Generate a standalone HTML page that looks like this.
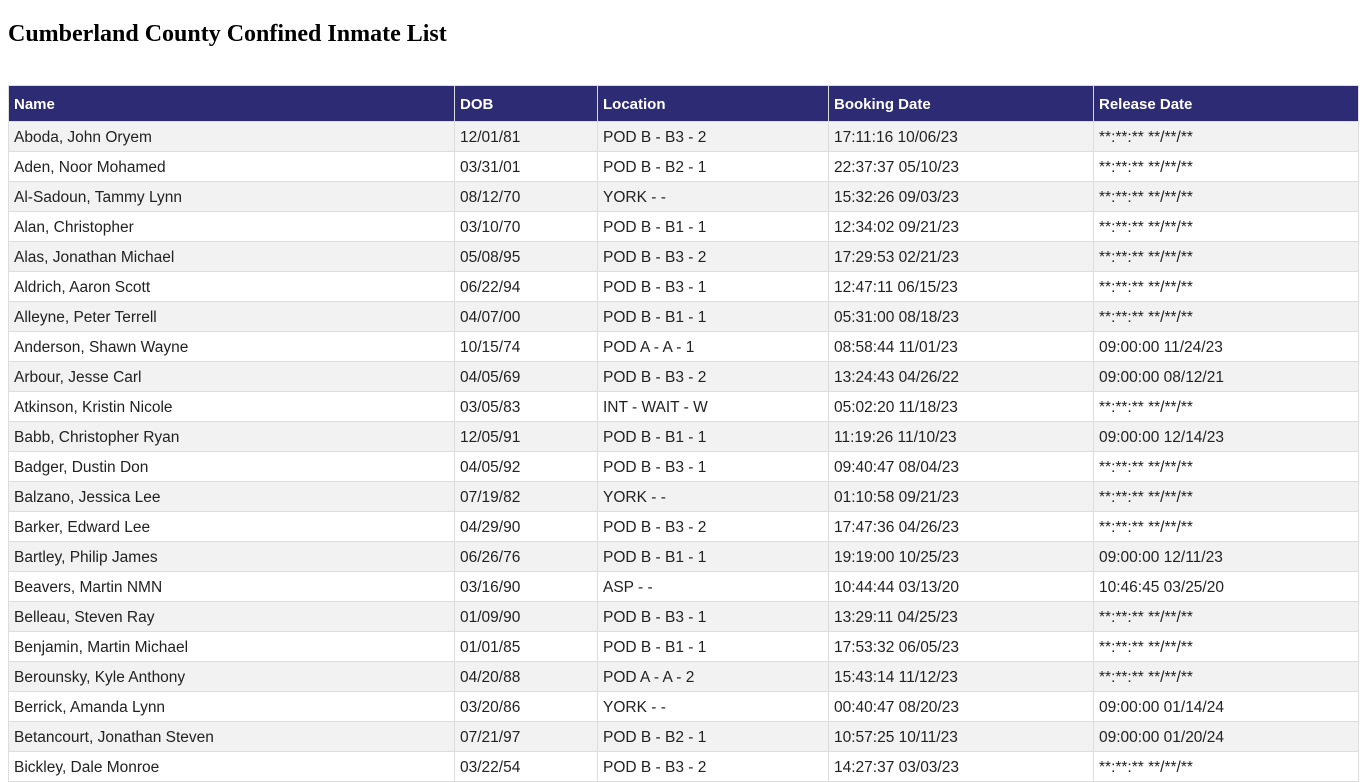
<!DOCTYPE html>
<html><head><meta charset="utf-8"><style>
body{margin:0;background:#fff;font-family:"Liberation Sans",sans-serif;}
h2{font-family:"Liberation Serif",serif;font-size:24px;font-weight:bold;margin:0;position:absolute;left:8px;top:21px;color:#000}
table{position:absolute;left:8px;top:85px;border-collapse:collapse;width:1350px;table-layout:fixed;font-size:15.5px;color:#222}
th{background:#2d2b73;color:#fff;text-align:left;font-weight:bold;height:36px;padding:2px 5px 0;border:1px solid #ddd;font-size:15px;box-sizing:border-box}
td{height:30px;padding:2px 5px 0;border:1px solid #ddd;white-space:nowrap;overflow:hidden;box-sizing:border-box}
tr:nth-child(odd) td{background:#f2f2f2}
</style></head><body>
<h2>Cumberland County Confined Inmate List</h2>
<table>
<colgroup><col style="width:446px"><col style="width:143px"><col style="width:231px"><col style="width:265px"><col style="width:265px"></colgroup>
<thead><tr><th>Name</th><th>DOB</th><th>Location</th><th>Booking Date</th><th>Release Date</th></tr></thead>
<tbody>
<tr><td>Aboda, John Oryem</td><td>12/01/81</td><td>POD B - B3 - 2</td><td>17:11:16 10/06/23</td><td>**:**:** **/**/**</td></tr>
<tr><td>Aden, Noor Mohamed</td><td>03/31/01</td><td>POD B - B2 - 1</td><td>22:37:37 05/10/23</td><td>**:**:** **/**/**</td></tr>
<tr><td>Al-Sadoun, Tammy Lynn</td><td>08/12/70</td><td>YORK - -</td><td>15:32:26 09/03/23</td><td>**:**:** **/**/**</td></tr>
<tr><td>Alan, Christopher</td><td>03/10/70</td><td>POD B - B1 - 1</td><td>12:34:02 09/21/23</td><td>**:**:** **/**/**</td></tr>
<tr><td>Alas, Jonathan Michael</td><td>05/08/95</td><td>POD B - B3 - 2</td><td>17:29:53 02/21/23</td><td>**:**:** **/**/**</td></tr>
<tr><td>Aldrich, Aaron Scott</td><td>06/22/94</td><td>POD B - B3 - 1</td><td>12:47:11 06/15/23</td><td>**:**:** **/**/**</td></tr>
<tr><td>Alleyne, Peter Terrell</td><td>04/07/00</td><td>POD B - B1 - 1</td><td>05:31:00 08/18/23</td><td>**:**:** **/**/**</td></tr>
<tr><td>Anderson, Shawn Wayne</td><td>10/15/74</td><td>POD A - A - 1</td><td>08:58:44 11/01/23</td><td>09:00:00 11/24/23</td></tr>
<tr><td>Arbour, Jesse Carl</td><td>04/05/69</td><td>POD B - B3 - 2</td><td>13:24:43 04/26/22</td><td>09:00:00 08/12/21</td></tr>
<tr><td>Atkinson, Kristin Nicole</td><td>03/05/83</td><td>INT - WAIT - W</td><td>05:02:20 11/18/23</td><td>**:**:** **/**/**</td></tr>
<tr><td>Babb, Christopher Ryan</td><td>12/05/91</td><td>POD B - B1 - 1</td><td>11:19:26 11/10/23</td><td>09:00:00 12/14/23</td></tr>
<tr><td>Badger, Dustin Don</td><td>04/05/92</td><td>POD B - B3 - 1</td><td>09:40:47 08/04/23</td><td>**:**:** **/**/**</td></tr>
<tr><td>Balzano, Jessica Lee</td><td>07/19/82</td><td>YORK - -</td><td>01:10:58 09/21/23</td><td>**:**:** **/**/**</td></tr>
<tr><td>Barker, Edward Lee</td><td>04/29/90</td><td>POD B - B3 - 2</td><td>17:47:36 04/26/23</td><td>**:**:** **/**/**</td></tr>
<tr><td>Bartley, Philip James</td><td>06/26/76</td><td>POD B - B1 - 1</td><td>19:19:00 10/25/23</td><td>09:00:00 12/11/23</td></tr>
<tr><td>Beavers, Martin NMN</td><td>03/16/90</td><td>ASP - -</td><td>10:44:44 03/13/20</td><td>10:46:45 03/25/20</td></tr>
<tr><td>Belleau, Steven Ray</td><td>01/09/90</td><td>POD B - B3 - 1</td><td>13:29:11 04/25/23</td><td>**:**:** **/**/**</td></tr>
<tr><td>Benjamin, Martin Michael</td><td>01/01/85</td><td>POD B - B1 - 1</td><td>17:53:32 06/05/23</td><td>**:**:** **/**/**</td></tr>
<tr><td>Berounsky, Kyle Anthony</td><td>04/20/88</td><td>POD A - A - 2</td><td>15:43:14 11/12/23</td><td>**:**:** **/**/**</td></tr>
<tr><td>Berrick, Amanda Lynn</td><td>03/20/86</td><td>YORK - -</td><td>00:40:47 08/20/23</td><td>09:00:00 01/14/24</td></tr>
<tr><td>Betancourt, Jonathan Steven</td><td>07/21/97</td><td>POD B - B2 - 1</td><td>10:57:25 10/11/23</td><td>09:00:00 01/20/24</td></tr>
<tr><td>Bickley, Dale Monroe</td><td>03/22/54</td><td>POD B - B3 - 2</td><td>14:27:37 03/03/23</td><td>**:**:** **/**/**</td></tr>
</tbody></table>
</body></html>
